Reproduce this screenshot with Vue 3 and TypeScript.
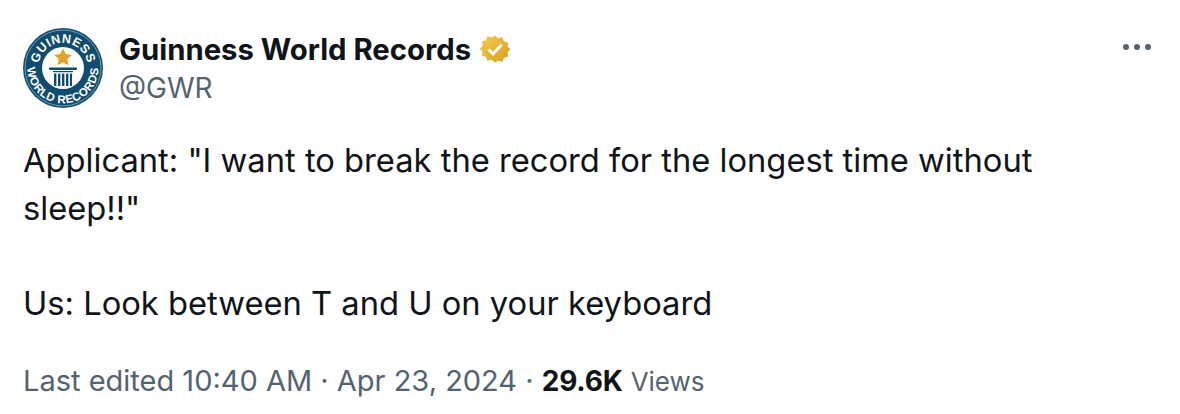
<script setup lang="ts">
const lines: string[] = [
  'Applicant: "I want to break the record for the longest time without sleep!!"',
  '',
  'Us: Look between T and U on your keyboard',
]
</script>

<template>
  <main class="tweet">
    <header class="head">
      <svg class="avatar" viewBox="0 0 80 80" aria-label="Guinness World Records logo">
        <defs>
          <path id="arc-top" d="M 15 40 A 25 25 0 0 1 65 40" />
          <path id="arc-bottom" d="M 4.5 40 A 35.5 35.5 0 0 0 75.5 40" />
        </defs>
        <circle cx="40" cy="40" r="40" fill="#0f4c6e" />
        <circle cx="40" cy="40" r="38" fill="none" stroke="#dfe9ef" stroke-width="0.5" />
        <circle cx="40" cy="40" r="21" fill="#fff" />
        <text class="ring"><textPath href="#arc-top" startOffset="50%" text-anchor="middle">GUINNESS</textPath></text>
        <text class="ring small"><textPath href="#arc-bottom" startOffset="50%" text-anchor="middle">WORLD RECORDS</textPath></text>
        <path d="M40 20.5l2.7 5.6 6.1.8-4.5 4.2 1.2 6.1-5.5-3-5.5 3 1.2-6.1-4.5-4.2 6.1-.8z" fill="#e0a526" />
        <rect x="26" y="39.5" width="28" height="2.6" rx="1" fill="#0f4c6e" />
        <rect x="30" y="43" width="20" height="1.2" fill="#0f4c6e" />
        <path d="M31 45.5h2.4V58H31zM35 45.5h2.4V58H35zM39 45.5h2.4V58H39zM43 45.5h2.4V58H43zM47 45.5h2V58h-2z" fill="#0f4c6e" />
      </svg>
      <div class="identity">
        <div class="name-row">
          <span class="name">Guinness World Records</span>
          <svg class="badge" viewBox="0 0 32 32" aria-hidden="true">
            <defs>
              <linearGradient id="gold" x1="0" y1="0" x2="1" y2="1">
                <stop offset="0" stop-color="#f4cf52" />
                <stop offset="1" stop-color="#d99a1c" />
              </linearGradient>
            </defs>
            <path d="M16 1l3.6 3.2 4.6-1.3 1.7 4.5 4.6 1.3-.6 4.8L33 16l-3.1 3.5.6 4.8-4.6 1.3-1.7 4.5-4.6-1.3L16 31l-3.6-3.2-4.6 1.3-1.7-4.5-4.6-1.3.6-4.8L-1 16l3.1-3.5-.6-4.8 4.6-1.3 1.7-4.5 4.6 1.3z" fill="url(#gold)" transform="translate(1.5 1.5) scale(.906)" />
            <path d="M9.5 16.5l4.6 4.4 8.6-9.3" fill="none" stroke="#fff" stroke-width="3" />
          </svg>
        </div>
        <div class="handle">@GWR</div>
      </div>
      <svg class="more" viewBox="0 0 28 6" aria-label="More">
        <circle cx="3" cy="3" r="3" />
        <circle cx="14" cy="3" r="3" />
        <circle cx="25" cy="3" r="3" />
      </svg>
    </header>

    <p v-for="(line, i) in lines" :key="i" class="line">{{ line || '\u00A0' }}</p>

    <footer class="meta">
      <span class="stamp">Last edited 10:40 AM · Apr 23, 2024 · </span>
      <strong>29.6K</strong>
      <span class="views">Views</span>
    </footer>
  </main>
</template>

<style>
html, body { margin: 0; background: #fff; }
</style>

<style scoped>
.tweet {
  box-sizing: border-box;
  width: 1180px;
  height: 414px;
  padding: 28px 29px 0 23px;
  font-family: Inter, "Liberation Sans", sans-serif;
  color: #0f1419;
  background: #fff;
  overflow: hidden;
}
.head { display: flex; align-items: flex-start; }
.avatar { width: 80px; height: 80px; flex: none; }
.ring {
  font-family: "Liberation Sans", sans-serif;
  font-size: 12.5px;
  font-weight: 700;
  letter-spacing: 0.5px;
  fill: #fff;
}
.ring.small { font-size: 11.5px; letter-spacing: 0.6px; }
.identity { margin-left: 16px; flex: 1; margin-top: 1px; }
.name-row { display: flex; align-items: center; height: 40px; }
.name { font-size: 29.3px; font-weight: 700; }
.badge { width: 32px; height: 32px; margin-left: 8px; }
.handle { font-size: 28px; line-height: 38px; color: #536471; }
.more { width: 28px; height: 6px; margin-top: 16px; fill: #536471; }
.line {
  margin: 0;
  width: 1060px;
  font-size: 32.7px;
  line-height: 47.5px;
}
.line:first-of-type { margin-top: 29px; }
.meta {
  margin-top: 34px;
  font-size: 29px;
  line-height: 40px;
  color: #536471;
  white-space: pre-wrap;
}
.meta strong { font-size: 28px; letter-spacing: -0.2px; color: #0f1419; font-weight: 700; }
.views { margin-left: 8px; font-size: 26px; }
</style>
